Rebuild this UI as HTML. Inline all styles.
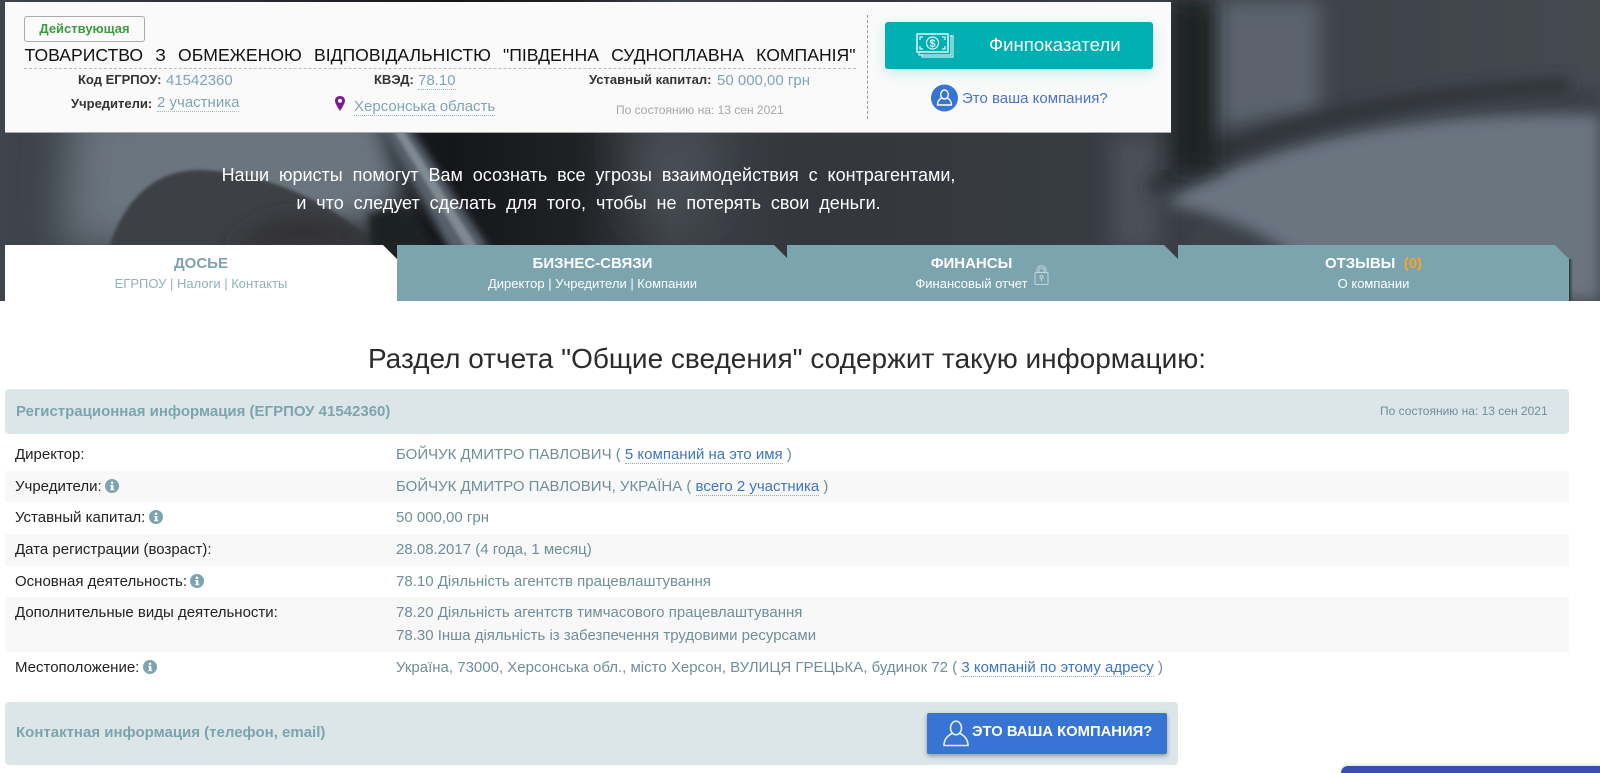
<!DOCTYPE html>
<html lang="ru"><head><meta charset="utf-8"><title>Досье</title>
<style>
html,body{margin:0;padding:0;background:#fff}
body{width:1600px;height:773px;position:relative;overflow:hidden;font-family:"Liberation Sans",Arial,sans-serif;color:#222}
.a{position:absolute;white-space:nowrap}
.lbl{font-weight:700;font-size:13px;line-height:16px;color:#333}
.val{font-size:15px;line-height:17px;color:#7fa5b2}
.dot{border-bottom:1px dotted #9db9c3}
.tab{position:absolute;top:245px;height:56px;width:391px;background:#7ba4af;color:#fff;text-align:center;clip-path:polygon(0 0,calc(100% - 14px) 0,100% 14px,100% 100%,0 100%);}
.tab b{position:absolute;left:0;right:0;top:10px;font-size:15px;line-height:18px}
.tab span{position:absolute;left:0;right:0;top:31px;font-size:13px;line-height:16px}
.sh{position:absolute;top:259px;height:42px;width:4px;background:linear-gradient(90deg,#2c363c,rgba(44,54,60,0))}
.row{position:absolute;left:5px;width:1564px;font-size:15px;line-height:22px}
.row.g{background:#f8f8f8}
.row .k{position:absolute;left:10px;top:var(--t);color:#222;white-space:nowrap}
.row .v{position:absolute;left:391px;top:var(--t);color:#6f8e9a;white-space:nowrap}
.row a{color:#3f74c9;border-bottom:1px dotted #8fa9d0}
.i{display:inline-block;vertical-align:-2px;margin-left:-1px}
</style></head><body>

<svg class="a" style="left:0;top:0" width="1600" height="301" viewBox="0 0 1600 301">
<defs>
<linearGradient id="bg" x1="0" x2="1" y1="0" y2="0">
<stop offset="0" stop-color="#3f454c"/><stop offset=".28" stop-color="#15161a"/><stop offset=".36" stop-color="#1f2125"/><stop offset=".42" stop-color="#3e4349"/><stop offset=".5" stop-color="#33363c"/><stop offset=".7" stop-color="#383c43"/><stop offset="1" stop-color="#454a51"/>
</linearGradient>
<filter id="b1" filterUnits="userSpaceOnUse" x="-100" y="-100" width="1800" height="500"><feGaussianBlur stdDeviation="1.500"/></filter>
<filter id="b3" filterUnits="userSpaceOnUse" x="-100" y="-100" width="1800" height="500"><feGaussianBlur stdDeviation="4"/></filter>
<filter id="b6" filterUnits="userSpaceOnUse" x="-100" y="-100" width="1800" height="500"><feGaussianBlur stdDeviation="7"/></filter>
<filter id="b8" filterUnits="userSpaceOnUse" x="-100" y="-100" width="1800" height="500"><feGaussianBlur stdDeviation="10"/></filter>
<filter id="b20" filterUnits="userSpaceOnUse" x="-100" y="-100" width="1800" height="500"><feGaussianBlur stdDeviation="22"/></filter>
<clipPath id="cp"><rect width="1600" height="301"/></clipPath>
</defs>
<g clip-path="url(#cp)">
<rect width="1600" height="301" fill="url(#bg)"/>
<!-- left light mass -->
<path d="M70 100H360L400 190 360 250H60Z" fill="#6a747e" filter="url(#b20)"/>
<path d="M130 120H375L395 200H150Z" fill="#6a747e" filter="url(#b8)"/>
<!-- arch -->
<path d="M108 250C122 205 150 170 200 170C265 172 325 200 372 240L385 250Z" fill="#3c3f44" filter="url(#b1)"/>
<path d="M230 250C260 215 310 205 372 235L385 250Z" fill="#303135" filter="url(#b8)"/>
<path d="M368 215L400 205L440 250H372Z" fill="#1f2024" filter="url(#b3)"/>
<!-- strap -->
<path d="M380 125L408 125L490 250L450 250Z" fill="#58616a" filter="url(#b3)"/>
<path d="M392 128L402 128L478 248L466 248Z" fill="#7f8992" filter="url(#b1)"/>
<!-- centre glow -->
<path d="M630 125H720L700 215H640Z" fill="#484e55" filter="url(#b20)"/>
<!-- right side -->
<path d="M1210 0H1320V110L1210 130Z" fill="#5c636d" filter="url(#b8)"/>
<path d="M1110 135H1160V250H1110Z" fill="#4a4f56" filter="url(#b8)"/>
<path d="M1160 300C1190 200 1290 130 1600 85V300Z" fill="#3e4248" filter="url(#b3)"/>
<path d="M1170 200C1250 150 1400 110 1600 115V300H1340C1300 245 1230 215 1170 205Z" fill="#6b7580" filter="url(#b6)"/>
<path d="M1150 190C1230 130 1400 95 1570 85" fill="none" stroke="#2f3237" stroke-width="15" filter="url(#b6)"/>
<path d="M1172 0H1215V170H1172Z" fill="#1e2024" filter="url(#b8)"/>
</g>
</svg>

<!-- top card -->
<div class="a" style="left:5px;top:2px;width:1166px;height:130px;background:#fafafa;box-shadow:0 1px 0 #aaa"></div>
<div class="a" style="left:24px;top:16px;width:119px;height:24px;border:1px solid #aaa;border-radius:3px;background:#fafafa;color:#3a9c3f;font-weight:700;font-size:13px;line-height:24px;text-align:center">Действующая</div>
<div class="a" style="left:24.500px;top:45px;width:831px;font-size:17.600px;line-height:20px;color:#111;text-align:justify;text-align-last:justify;white-space:normal">ТОВАРИСТВО З ОБМЕЖЕНОЮ ВІДПОВІДАЛЬНІСТЮ "ПІВДЕННА СУДНОПЛАВНА КОМПАНІЯ"</div>
<div class="a" style="left:24px;top:68px;width:832px;border-top:1px dashed #bbb"></div>
<div class="a" style="left:867px;top:15px;height:104px;border-left:1px dashed #999"></div>

<div class="a lbl" style="left:78px;top:72px">Код ЕГРПОУ:</div><div class="a val" style="left:166px;top:72px">41542360</div>
<div class="a lbl" style="left:374px;top:72px">КВЭД:</div><div class="a val dot" style="left:418px;top:72px">78.10</div>
<div class="a lbl" style="left:589px;top:72px">Уставный капитал:</div><div class="a val" style="left:717px;top:72px">50 000,00 грн</div>
<div class="a lbl" style="left:71px;top:96px">Учредители:</div><div class="a val dot" style="left:157px;top:94px">2 участника</div>
<svg class="a" style="left:334px;top:96px" width="12" height="16" viewBox="0 0 12 16"><path fill-rule="evenodd" d="M6 0C2.800 0 1 2.200 1 4.800 1 8 6 15 6 15s5-7 5-10.200C11 2.200 9.200 0 6 0zm0 2.800a2 2 0 1 1 0 4 2 2 0 0 1 0-4z" fill="#7b1a8e"/></svg>
<div class="a val dot" style="left:354px;top:98px">Херсонська область</div>
<div class="a" style="left:616px;top:103px;font-size:12px;line-height:14px;color:#a6a6a6">По состоянию на: 13 сен 2021</div>

<div class="a" style="left:885px;top:22px;width:268px;height:47px;border-radius:3px;background:#00afb2;box-shadow:0 4px 14px rgba(0,175,178,.2)"></div>
<svg class="a" style="left:915px;top:32px" width="40" height="27" viewBox="0 0 40 27" fill="none" stroke="#c9efef" stroke-width="1.200">
<path d="M35 4H38V25H7V22"/><path d="M4 21V23H36V3"/>
<rect x="2" y="2" width="31" height="18" stroke="#e2f7f7" stroke-width="1.500"/>
<circle cx="17.500" cy="11" r="6" stroke="#e2f7f7"/>
<path d="M5 8V5H8M30 8V5H27M5 14V17H8M30 14V17H27" stroke="#e2f7f7"/>
<text x="17.500" y="15" font-size="11" font-weight="700" text-anchor="middle" fill="#e2f7f7" stroke="none" font-family="Liberation Sans">$</text></svg>
<div class="a" style="left:989px;top:34px;font-size:18.600px;line-height:22px;color:#fff">Финпоказатели</div>

<svg class="a" style="left:931px;top:84px" width="27" height="28" viewBox="0 0 27 28"><circle cx="13.500" cy="14" r="13.500" fill="#3874d3"/><g fill="none" stroke="#fff" stroke-width="1.400"><ellipse cx="13.500" cy="10.500" rx="3.800" ry="4.500"/><path d="M10.500 14C8 15.500 6.500 18 6.500 21H20.500C20.500 18 19 15.500 16.500 14"/></g></svg>
<div class="a" style="left:962px;top:90px;font-size:15px;line-height:18px;color:#4a72cf">Это ваша компания?</div>

<div class="a" style="left:0;top:164px;width:1177px;text-align:center;color:#fff;font-size:18px;line-height:22px;word-spacing:4.900px">Наши юристы помогут Вам осознать все угрозы взаимодействия с контрагентами,</div>
<div class="a" style="left:0;top:192px;width:1177px;text-align:center;color:#fff;font-size:18px;line-height:22px;word-spacing:4.900px">и что следует сделать для того, чтобы не потерять свои деньги.</div>

<!-- tabs -->
<div class="sh" style="left:788px"></div><div class="sh" style="left:1178px"></div><div class="sh" style="left:1569px"></div>
<div class="tab" style="left:5px;width:392px;background:#fff;color:#7ba4af"><b>ДОСЬЕ</b><span style="color:#8fb1bc">ЕГРПОУ | Налоги | Контакты</span></div>
<div class="tab" style="left:397px"><b>БИЗНЕС-СВЯЗИ</b><span>Директор | Учредители | Компании</span></div>
<div class="tab" style="left:787px"><b style="left:-11px;right:11px">ФИНАНСЫ</b><span style="left:-11px;right:11px">Финансовый отчет</span></div>
<svg class="a" style="left:1034px;top:265px" width="15" height="20" viewBox="0 0 15 20" fill="none" stroke="#c3d6db" stroke-width="1"><rect x="1" y="7.500" width="13" height="12" rx="1"/><path d="M3 7.500V5C3 2.500 5 .8 7.500 .8S12 2.500 12 5V7.500M5 7.500V5.500C5 4 6 3 7.500 3S10 4 10 5.500V7.500"/><circle cx="7.500" cy="12" r="1.500"/><path d="M7.500 13.500V16.500"/></svg>
<div class="tab" style="left:1178px"><b>ОТЗЫВЫ&nbsp; <i style="font-style:normal;color:#f5a623">(0)</i></b><span>О компании</span></div>

<div class="a" style="left:0;top:342px;width:1574px;text-align:center;font-size:28px;line-height:34px;color:#2b2b2b">Раздел отчета "Общие сведения" содержит такую информацию:</div>

<div class="a" style="left:5px;top:389px;width:1564px;height:45px;background:#dce6e8;border-radius:4px"></div>
<div class="a" style="left:16px;top:403px;font-size:15px;font-weight:700;line-height:18px;color:#7ba4af">Регистрационная информация (ЕГРПОУ 41542360)</div>
<div class="a" style="left:1380px;top:404px;font-size:12px;line-height:15px;color:#6f8e9a">По состоянию на: 13 сен 2021</div>

<div class="row" style="top:438px;height:33px;--t:6px"><div class="k">Директор:</div><div class="v">БОЙЧУК ДМИТРО ПАВЛОВИЧ ( <a>5 компаний на это имя</a> )</div></div>
<div class="row g" style="top:471px;height:31px;--t:5px"><div class="k">Учредители: <svg class="i" width="14" height="14" viewBox="0 0 14 14"><circle cx="7" cy="7" r="7" fill="#7ba4af"/><rect x="6" y="6" width="2.400" height="5" fill="#fff"/><rect x="5.200" y="6" width="2" height="1.200" fill="#fff"/><rect x="5.200" y="10" width="4" height="1.200" fill="#fff"/><circle cx="7" cy="3.800" r="1.300" fill="#fff"/></svg></div><div class="v">БОЙЧУК ДМИТРО ПАВЛОВИЧ, УКРАЇНА ( <a>всего 2 участника</a> )</div></div>
<div class="row" style="top:502px;height:32px;--t:5px"><div class="k">Уставный капитал: <svg class="i" width="14" height="14" viewBox="0 0 14 14"><circle cx="7" cy="7" r="7" fill="#7ba4af"/><rect x="6" y="6" width="2.400" height="5" fill="#fff"/><rect x="5.200" y="6" width="2" height="1.200" fill="#fff"/><rect x="5.200" y="10" width="4" height="1.200" fill="#fff"/><circle cx="7" cy="3.800" r="1.300" fill="#fff"/></svg></div><div class="v">50 000,00 грн</div></div>
<div class="row g" style="top:534px;height:32px;--t:5px"><div class="k">Дата регистрации (возраст):</div><div class="v">28.08.2017 (4 года, 1 месяц)</div></div>
<div class="row" style="top:566px;height:31px;--t:5px"><div class="k">Основная деятельность: <svg class="i" width="14" height="14" viewBox="0 0 14 14"><circle cx="7" cy="7" r="7" fill="#7ba4af"/><rect x="6" y="6" width="2.400" height="5" fill="#fff"/><rect x="5.200" y="6" width="2" height="1.200" fill="#fff"/><rect x="5.200" y="10" width="4" height="1.200" fill="#fff"/><circle cx="7" cy="3.800" r="1.300" fill="#fff"/></svg></div><div class="v">78.10 Діяльність агентств працевлаштування</div></div>
<div class="row g" style="top:597px;height:55px;--t:5px"><div class="k">Дополнительные виды деятельности:</div><div class="v" style="line-height:22.500px">78.20 Діяльність агентств тимчасового працевлаштування<br>78.30 Інша діяльність із забезпечення трудовими ресурсами</div></div>
<div class="row" style="top:652px;height:32px;--t:5px"><div class="k">Местоположение: <svg class="i" width="14" height="14" viewBox="0 0 14 14"><circle cx="7" cy="7" r="7" fill="#7ba4af"/><rect x="6" y="6" width="2.400" height="5" fill="#fff"/><rect x="5.200" y="6" width="2" height="1.200" fill="#fff"/><rect x="5.200" y="10" width="4" height="1.200" fill="#fff"/><circle cx="7" cy="3.800" r="1.300" fill="#fff"/></svg></div><div class="v">Україна, 73000, Херсонська обл., місто Херсон, ВУЛИЦЯ ГРЕЦЬКА, будинок 72 ( <a>3 компаній по этому адресу</a> )</div></div>

<div class="a" style="left:5px;top:702px;width:1173px;height:63px;background:#dce6e8;border-radius:4px"></div>
<div class="a" style="left:16px;top:724px;font-size:15px;font-weight:700;line-height:18px;color:#7ba4af">Контактная информация (телефон, email)</div>
<div class="a" style="left:927px;top:713px;width:240px;height:41px;background:#3874d3;border-radius:2px;box-shadow:0 2px 5px rgba(0,0,0,.35)"></div>
<svg class="a" style="left:942px;top:720px" width="28" height="27" viewBox="0 0 28 27" fill="none" stroke="#e6eefb" stroke-width="1.600"><ellipse cx="14" cy="8" rx="5.500" ry="6.800"/><path d="M10 13.500C5 16 2 20 2 25.500H26C26 20 23 16 18 13.500"/></svg>
<div class="a" style="left:972px;top:723px;font-size:14.800px;font-weight:700;line-height:18px;color:#fff">ЭТО ВАША КОМПАНИЯ?</div>

<div class="a" style="left:1341px;top:766px;width:259px;height:7px;background:#3a4db0;border-radius:8px 0 0 0;box-shadow:0 -1px 3px rgba(0,0,0,.15)"></div>
</body></html>
